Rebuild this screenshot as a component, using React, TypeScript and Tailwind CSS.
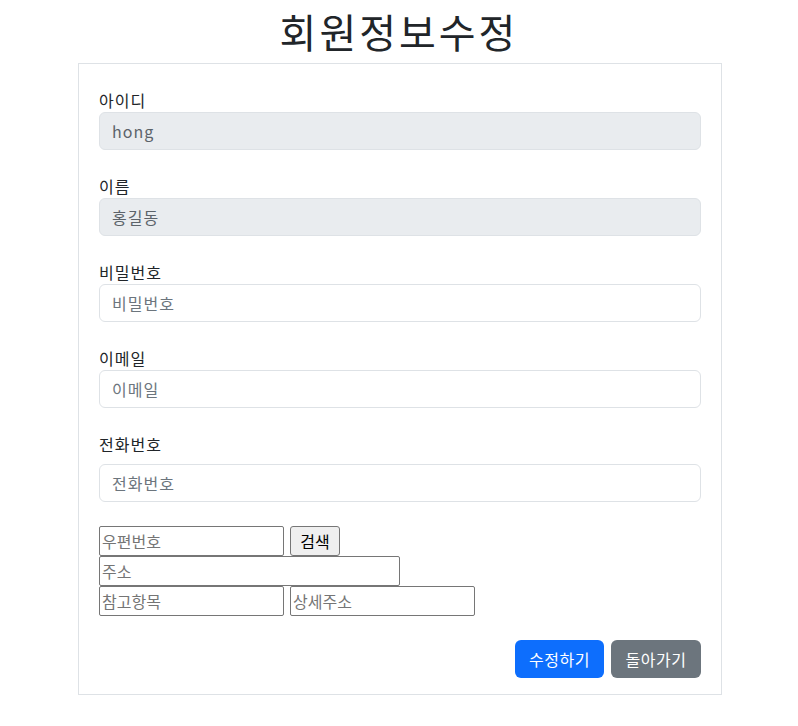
import React from 'react';

const font = { fontFamily: '"Noto Sans CJK KR", "Noto Sans", sans-serif' };

const Field = ({ label, value, placeholder, disabled, gap }: { label: string; value?: string; placeholder: string; disabled?: boolean; gap?: boolean }) => (
  <div className="mb-6">
    <label className={`block text-base leading-6 tracking-[1px] text-[#212529] ${gap ? 'mb-2' : ''}`}>{label}</label>
    <input
      type="text"
      defaultValue={value}
      placeholder={placeholder}
      disabled={disabled}
      className={`block w-full h-[38px] px-3 text-base leading-6 tracking-[1px] rounded-[6px] border border-[#dee2e6] placeholder:text-[#6c757d] outline-none ${
        disabled ? 'bg-[#e9ecef] text-[#5c636a]' : 'bg-white text-[#212529]'
      }`}
    />
  </div>
);

const Plain = ({ placeholder, w }: { placeholder: string; w: string }) => (
  <input
    type="text"
    placeholder={placeholder}
    className={`${w} h-[30px] px-[2px] text-base border border-[#767676] rounded-[2px] bg-white placeholder:text-[#757575] outline-none`}
  />
);

export default function App() {
  return (
    <div className="bg-white min-h-[726px] pt-[7px]" style={font}>
      <h1 className="text-center text-[40px] leading-[48px] font-normal tracking-[3px] text-[#212529] mb-2">회원정보수정</h1>
      <div className="ml-[78px] w-[644px] border border-[#dee2e6] px-5 pt-6 pb-4">
        <Field label="아이디" value="hong" placeholder="" disabled />
        <Field label="이름" value="홍길동" placeholder="" disabled />
        <Field label="비밀번호" placeholder="비밀번호" />
        <Field label="이메일" placeholder="이메일" />
        <Field label="전화번호" placeholder="전화번호" gap />

        <div className="flex flex-col">
          <div className="flex gap-[6px]">
            <Plain placeholder="우편번호" w="w-[185px]" />
            <button className="h-[30px] w-[50px] text-base text-black bg-[#efefef] border border-[#767676] rounded-[3px]">검색</button>
          </div>
          <div className="flex">
            <Plain placeholder="주소" w="w-[301px]" />
          </div>
          <div className="flex gap-[6px]">
            <Plain placeholder="참고항목" w="w-[185px]" />
            <Plain placeholder="상세주소" w="w-[185px]" />
          </div>
        </div>

        <div className="flex justify-end gap-[7px] mt-6">
          <button className="h-[38px] w-[89px] text-base leading-6 tracking-[0.5px] text-white bg-[#0d6efd] rounded-[6px]">수정하기</button>
          <button className="h-[38px] w-[90px] text-base leading-6 tracking-[0.5px] text-white bg-[#6c757d] rounded-[6px]">돌아가기</button>
        </div>
      </div>
    </div>
  );
}
